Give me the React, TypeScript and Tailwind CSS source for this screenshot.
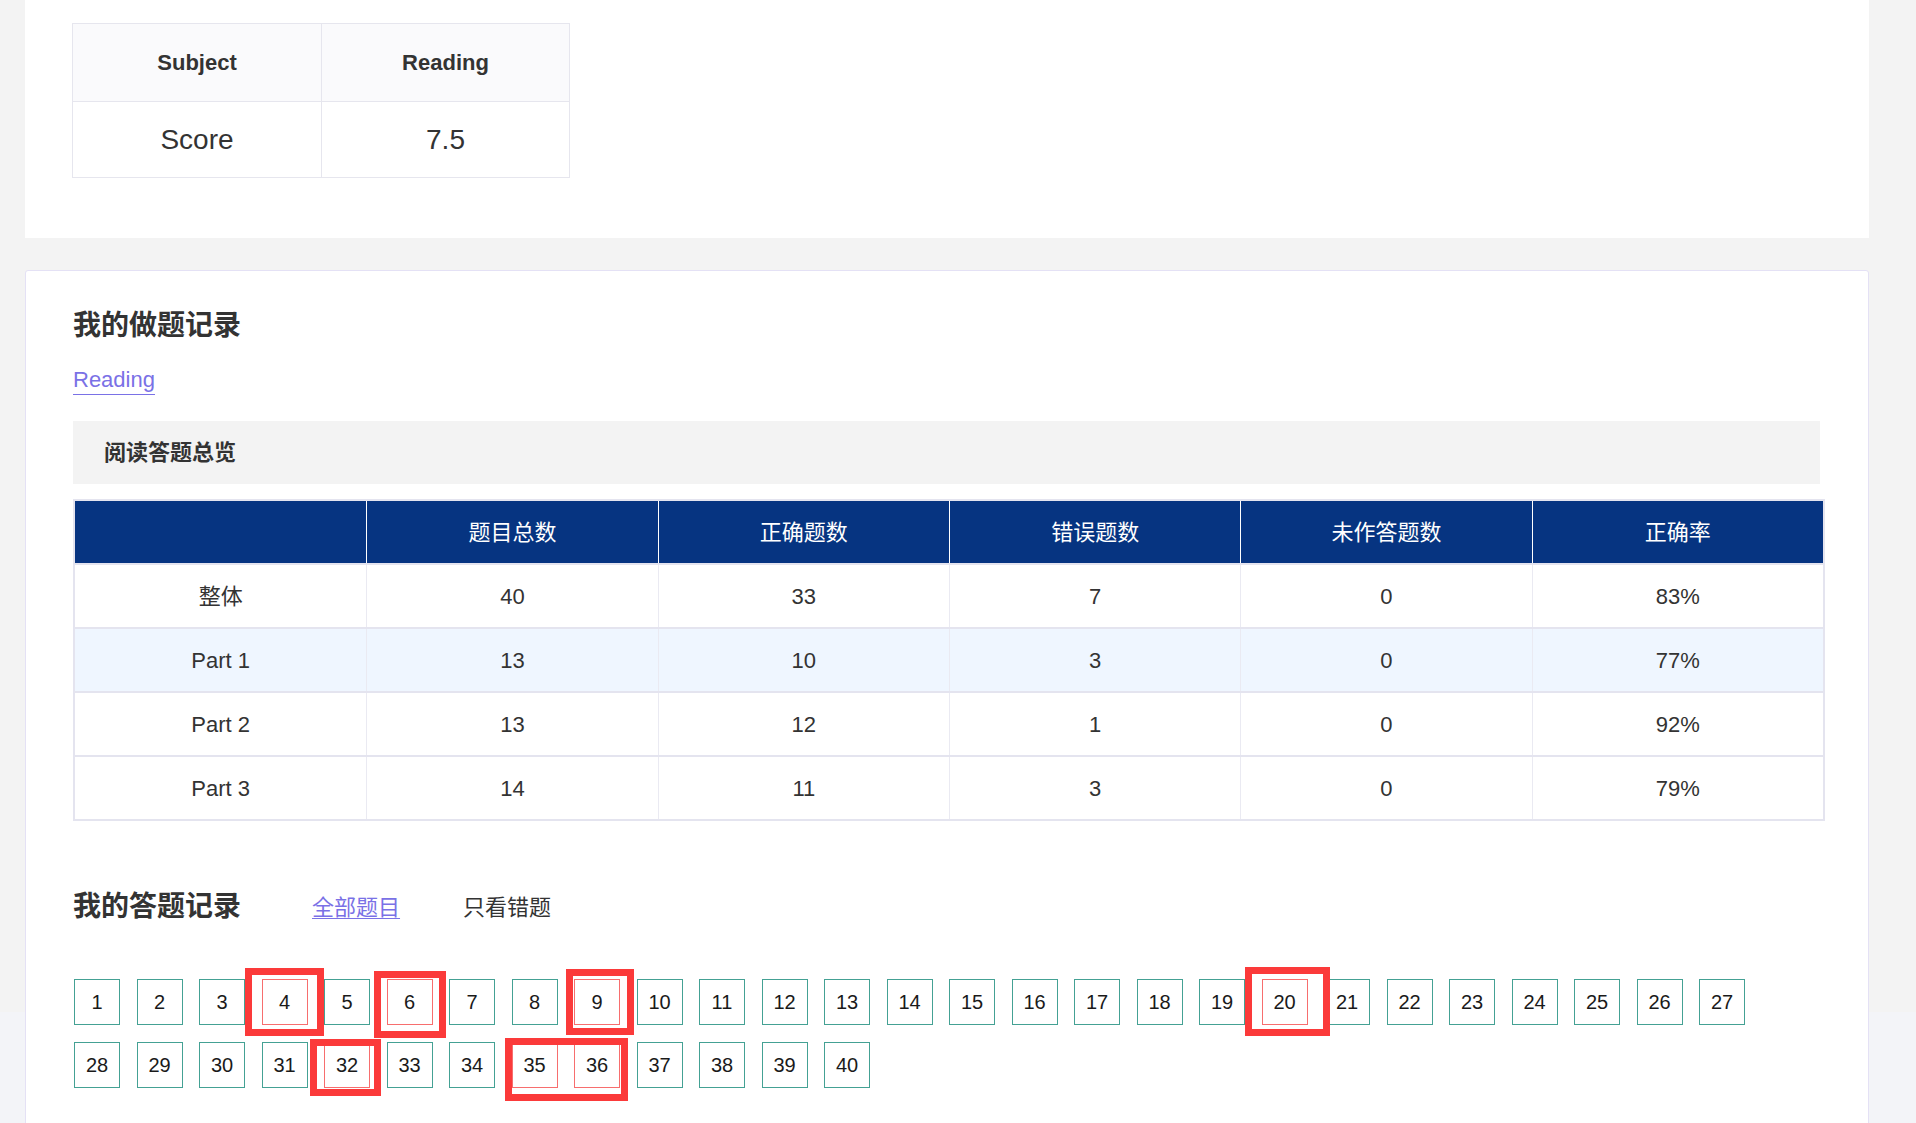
import React from "react";

const FONT = "font-['Liberation_Sans','Noto_Sans_CJK_SC',sans-serif]";

const headers = ["", "题目总数", "正确题数", "错误题数", "未作答题数", "正确率"];
const rows: { cells: string[]; bg: string }[] = [
  { cells: ["整体", "40", "33", "7", "0", "83%"], bg: "bg-white" },
  { cells: ["Part 1", "13", "10", "3", "0", "77%"], bg: "bg-[#eff6ff]" },
  { cells: ["Part 2", "13", "12", "1", "0", "92%"], bg: "bg-white" },
  { cells: ["Part 3", "14", "11", "3", "0", "79%"], bg: "bg-white" },
];

const wrong = new Set([4, 6, 9, 20, 32, 35, 36]);

function Box({ n }: { n: number }) {
  const bad = wrong.has(n);
  return (
    <div
      className={
        "w-[46px] h-[46px] flex items-center justify-center text-[20px] text-[#1a1a1a] border bg-white " +
        (bad ? "border-[#f76e6e]" : "border-[#44a194]")
      }
    >
      {n}
    </div>
  );
}

const marks = [
  { l: 245, t: 968, w: 79, h: 68 },
  { l: 374, t: 971, w: 72, h: 67 },
  { l: 566, t: 969, w: 68, h: 66 },
  { l: 1245, t: 967, w: 85, h: 69 },
  { l: 310, t: 1039, w: 71, h: 57 },
  { l: 505, t: 1038, w: 123, h: 63 },
];

export default function App() {
  const nums = Array.from({ length: 40 }, (_, i) => i + 1);
  return (
    <div className={"relative h-[1123px] overflow-hidden bg-[#f3f4f8] " + FONT}>
      <div className="h-[1012px] bg-[#f3f3f3] pl-[25px] pr-[47px]">
        {/* top card */}
        <div className="bg-white pl-[47px] pt-[23px] pb-[60px]">
          <div className="w-[498px] border border-[#e6e6ee] text-[#333]">
            <div className="grid grid-cols-2 h-[77px] bg-[#fafafc]">
              <div className="flex items-center justify-center text-[22px] font-bold">Subject</div>
              <div className="flex items-center justify-center text-[22px] font-bold border-l border-[#e6e6ee]">Reading</div>
            </div>
            <div className="grid grid-cols-2 h-[76px] border-t border-[#e6e6ee]">
              <div className="flex items-center justify-center text-[28px]">Score</div>
              <div className="flex items-center justify-center text-[28px] border-l border-[#e6e6ee]">7.5</div>
            </div>
          </div>
        </div>

        {/* second card */}
        <div className="mt-[32px] bg-white border border-[#e4e1f5] rounded-[3px] pl-[47px] pt-[35px] pb-[60px]">
          <div className="h-[40px] leading-[40px] text-[28px] font-bold text-[#333]">我的做题记录</div>
          <div className="mt-[19px] flex">
            <span className="leading-[29px] text-[22px] text-[#7a71e6] border-b border-[#7a71e6]">Reading</span>
          </div>
          <div className="mt-[26px] w-[1747px] h-[63px] bg-[#f3f3f3] pl-[31px] flex items-center text-[22px] font-bold text-[#333]">
            阅读答题总览
          </div>

          <div className="mt-[15px] w-[1752px] border-2 border-[#e4e4ef]">
            <div className="grid grid-cols-6 h-[62px] bg-[#063481] text-white text-[22px]">
              {headers.map((h, i) => (
                <div
                  key={i}
                  className={"flex items-center justify-center " + (i > 0 ? "border-l border-white" : "")}
                >
                  {h}
                </div>
              ))}
            </div>
            {rows.map((r, ri) => (
              <div
                key={ri}
                className={"grid grid-cols-6 h-[64px] border-t-2 border-[#e4e4ef] text-[22px] text-[#333] " + r.bg}
              >
                {r.cells.map((c, ci) => (
                  <div
                    key={ci}
                    className={"flex items-center justify-center " + (ci > 0 ? "border-l border-[#eaeaf2]" : "")}
                  >
                    {c}
                  </div>
                ))}
              </div>
            ))}
          </div>

          <div className="mt-[66px] h-[40px] flex items-center">
            <span className="text-[28px] font-bold text-[#333] leading-[40px]">我的答题记录</span>
            <span className="ml-[71px] text-[22px] text-[#7a71e6] underline decoration-1 underline-offset-[3px]">全部题目</span>
            <span className="ml-[63px] text-[22px] text-[#333]">只看错题</span>
          </div>

          <div className="mt-[52px] pl-[1px] flex flex-col gap-y-[17px]">
            <div className="flex gap-x-[16.5px]">
              {nums.slice(0, 27).map((n) => (
                <Box key={n} n={n} />
              ))}
            </div>
            <div className="flex gap-x-[16.5px]">
              {nums.slice(27).map((n) => (
                <Box key={n} n={n} />
              ))}
            </div>
          </div>
        </div>
      </div>

      {marks.map((m, i) => (
        <div
          key={i}
          className="absolute border-[7px] border-[#fb3a3a] pointer-events-none"
          style={{ left: m.l, top: m.t, width: m.w, height: m.h }}
        />
      ))}
    </div>
  );
}
